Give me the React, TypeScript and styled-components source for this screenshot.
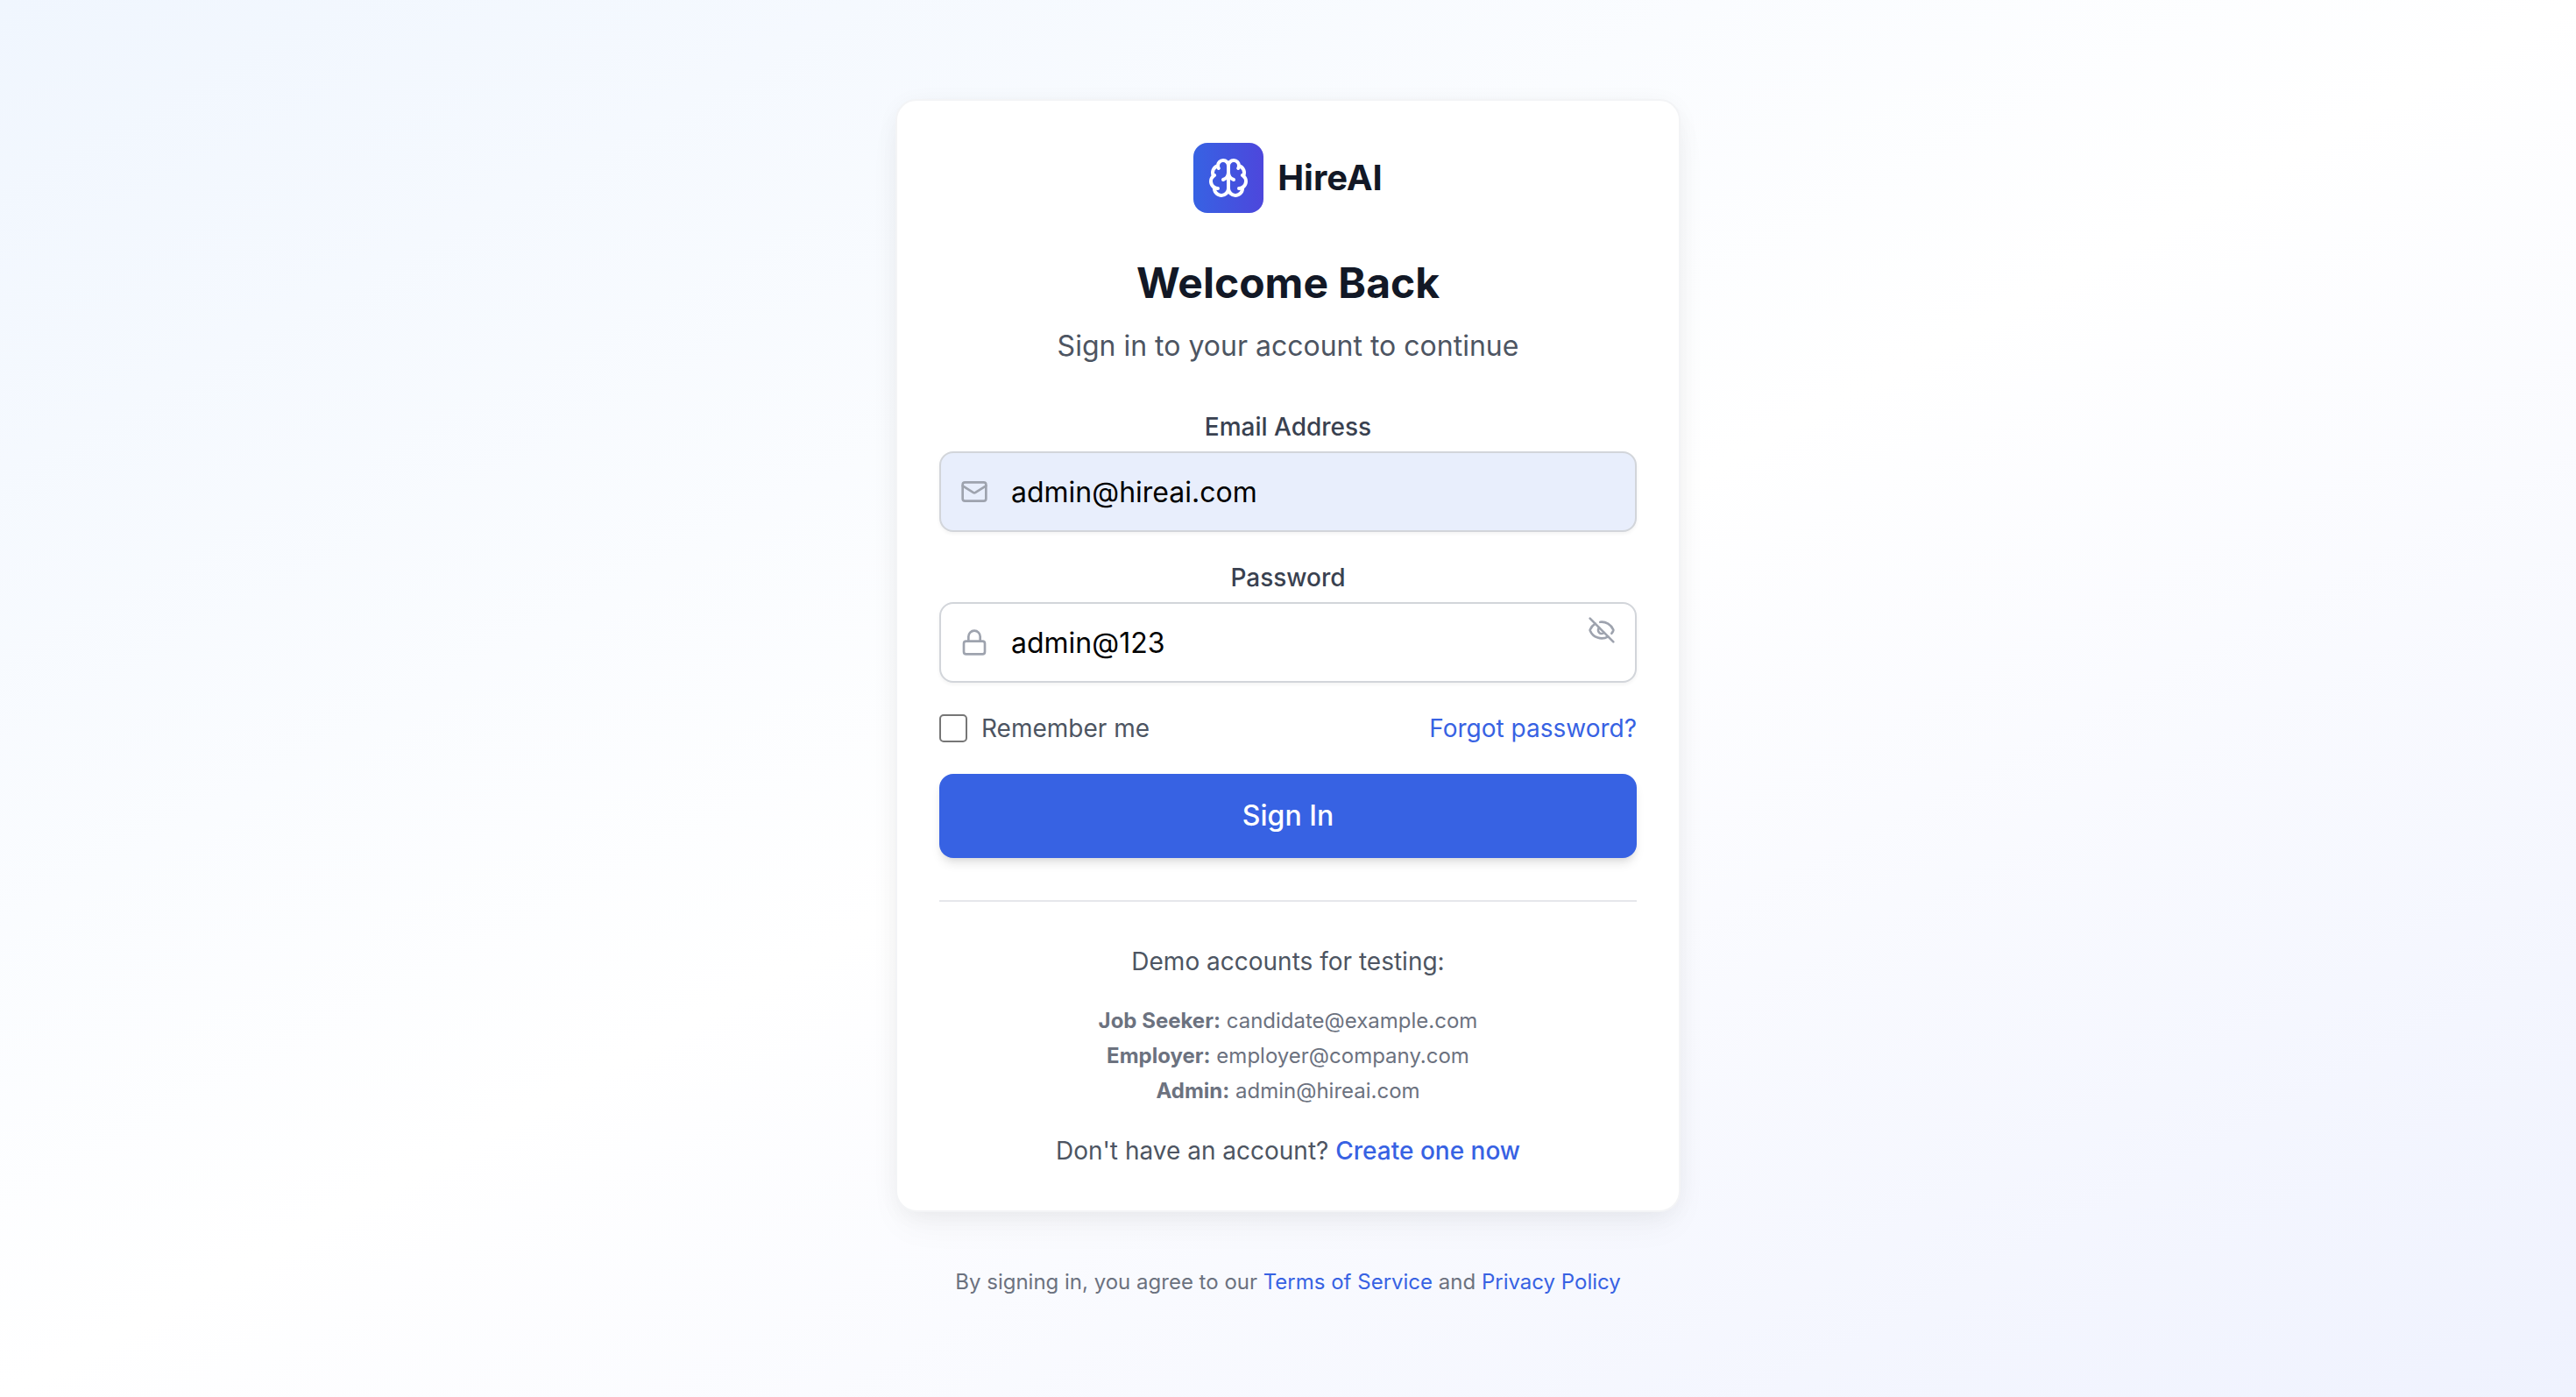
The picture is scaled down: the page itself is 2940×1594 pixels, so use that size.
import React, { useState } from "react";
import styled, { createGlobalStyle } from "styled-components";
import { EyeOff, Eye, Lock, Mail } from "lucide-react";

const color = {
  primary: "#3762e3",
  accent: "#4d47dc",
  heading: "#121826",
  label: "#394150",
  body: "#4d5562",
  muted: "#6c727f",
  icon: "#9ea3ae",
  border: "#d2d5da",
  divider: "#e6e7eb",
};

const GlobalStyle = createGlobalStyle`
  *, *::before, *::after { box-sizing: border-box; }
  body {
    margin: 0;
    font-family: Inter, "Liberation Sans", sans-serif;
    font-size: 32px;
    line-height: 48px;
    -webkit-font-smoothing: antialiased;
  }
  h1, p, ul { margin: 0; padding: 0; }
  input, button { font: inherit; }
`;

const Page = styled.div`
  min-height: 100vh;
  padding: 96px 32px 98px;
  display: flex;
  flex-direction: column;
  align-items: center;
  justify-content: center;
  text-align: center;
  background: linear-gradient(to bottom right, #f0f6fe, #ffffff, #eff2fe);
`;

const Column = styled.main`
  width: 100%;
  max-width: 896px;
  display: flex;
  flex-direction: column;
  gap: 64px;
`;

const Card = styled.section`
  display: flex;
  flex-direction: column;
  gap: 48px;
  padding: 48px;
  background: #ffffff;
  border: 2px solid #f3f4f6;
  border-radius: 24px;
  box-shadow: 0 4px 30px -6px rgba(0, 0, 0, 0.07),
    0 20px 40px -4px rgba(0, 0, 0, 0.04);
`;

const Header = styled.header`
  display: flex;
  flex-direction: column;
  align-items: center;
`;

const Brand = styled.div`
  display: flex;
  align-items: center;
  gap: 16px;
  margin-bottom: 48px;
`;

const BrandMark = styled.span`
  display: flex;
  padding: 16px;
  border-radius: 16px;
  color: #ffffff;
  background: linear-gradient(to right, ${color.primary}, ${color.accent});
`;

const BrandName = styled.span`
  font-size: 40px;
  line-height: 56px;
  font-weight: 700;
  color: ${color.heading};
`;

const Title = styled.h1`
  font-size: 48px;
  line-height: 64px;
  font-weight: 700;
  color: ${color.heading};
`;

const Subtitle = styled.p`
  margin-top: 16px;
  color: ${color.body};
`;

const Form = styled.form`
  display: flex;
  flex-direction: column;
  gap: 32px;
`;

const Field = styled.div`
  display: flex;
  flex-direction: column;
  gap: 8px;
`;

const Label = styled.label`
  font-size: 28px;
  line-height: 40px;
  font-weight: 500;
  color: ${color.label};
`;

const InputWrap = styled.div`
  position: relative;
  display: flex;
`;

const LeadingIcon = styled.span`
  position: absolute;
  top: 0;
  bottom: 0;
  left: 24px;
  display: flex;
  align-items: center;
  color: ${color.icon};
  pointer-events: none;
`;

const Input = styled.input<{ $filled?: boolean }>`
  width: 100%;
  height: 92px;
  padding: 20px 80px;
  border: 2px solid ${color.border};
  border-radius: 16px;
  color: #000000;
  background: ${(p) => (p.$filled ? "#e8eefc" : "#ffffff")};
  box-shadow: 0 2px 4px rgba(0, 0, 0, 0.05);
  outline: none;
`;

const RevealButton = styled.button`
  position: absolute;
  top: 16px;
  right: 24px;
  display: flex;
  padding: 0;
  border: 0;
  background: none;
  color: ${color.icon};
  cursor: pointer;
`;

const OptionsRow = styled.div`
  display: flex;
  align-items: center;
  justify-content: space-between;
  font-size: 28px;
  line-height: 40px;
`;

const Remember = styled.label`
  display: flex;
  align-items: center;
  gap: 16px;
  color: ${color.body};
`;

const Checkbox = styled.input`
  appearance: none;
  width: 32px;
  height: 32px;
  margin: 0;
  border: 2px solid #767676;
  border-radius: 5px;
  background: #ffffff;
  &:checked {
    border-color: ${color.primary};
    background: ${color.primary};
  }
`;

const TextLink = styled.a<{ $strong?: boolean }>`
  color: ${color.primary};
  font-weight: ${(p) => (p.$strong ? 500 : 400)};
  text-decoration: none;
`;

const SubmitButton = styled.button`
  padding: 24px 32px;
  border: 0;
  border-radius: 16px;
  font-weight: 500;
  color: #ffffff;
  background: ${color.primary};
  box-shadow: 0 8px 12px -2px rgba(0, 0, 0, 0.1),
    0 4px 8px -4px rgba(0, 0, 0, 0.1);
  cursor: pointer;
`;

const Extras = styled.div`
  display: flex;
  flex-direction: column;
  gap: 32px;
  padding-top: 48px;
  border-top: 2px solid ${color.divider};
  font-size: 28px;
  line-height: 40px;
  color: ${color.body};
`;

const DemoList = styled.ul`
  display: flex;
  flex-direction: column;
  gap: 8px;
  list-style: none;
  font-size: 24px;
  line-height: 32px;
  color: ${color.muted};
`;

const Legal = styled.p`
  font-size: 24px;
  line-height: 32px;
  color: ${color.muted};
`;

const BrainIcon = () => (
  <svg
    width="48"
    height="48"
    viewBox="0 0 24 24"
    fill="none"
    stroke="currentColor"
    strokeWidth="2"
    strokeLinecap="round"
    strokeLinejoin="round"
    aria-hidden="true"
  >
    <path d="M12 5a3 3 0 1 0-5.997.125 4 4 0 0 0-2.526 5.77 4 4 0 0 0 .556 6.588A4 4 0 1 0 12 18Z" />
    <path d="M12 5a3 3 0 1 1 5.997.125 4 4 0 0 1 2.526 5.77 4 4 0 0 1-.556 6.588A4 4 0 1 1 12 18Z" />
    <path d="M15 13a4.5 4.5 0 0 1-3-4 4.5 4.5 0 0 1-3 4" />
    <path d="M17.599 6.5a3 3 0 0 0 .399-1.375" />
    <path d="M6.003 5.125A3 3 0 0 0 6.401 6.5" />
    <path d="M3.477 10.896a4 4 0 0 1 .585-.396" />
    <path d="M19.938 10.5a4 4 0 0 1 .585.396" />
    <path d="M6 18a4 4 0 0 1-1.967-.516" />
    <path d="M19.967 17.484A4 4 0 0 1 18 18" />
  </svg>
);

const demoAccounts = [
  { role: "Job Seeker:", email: "candidate@example.com" },
  { role: "Employer:", email: "employer@company.com" },
  { role: "Admin:", email: "admin@hireai.com" },
];

export default function App() {
  const [email, setEmail] = useState("admin@hireai.com");
  const [password, setPassword] = useState("admin@123");
  const [visible, setVisible] = useState(true);

  return (
    <>
      <GlobalStyle />
      <Page>
        <Column>
          <Card>
            <Header>
              <Brand>
                <BrandMark>
                  <BrainIcon />
                </BrandMark>
                <BrandName>HireAI</BrandName>
              </Brand>
              <Title>Welcome Back</Title>
              <Subtitle>Sign in to your account to continue</Subtitle>
            </Header>

            <Form onSubmit={(e) => e.preventDefault()}>
              <Field>
                <Label htmlFor="email">Email Address</Label>
                <InputWrap>
                  <Input
                    id="email"
                    type="email"
                    $filled
                    value={email}
                    onChange={(e) => setEmail(e.target.value)}
                  />
                  <LeadingIcon>
                    <Mail size={32} />
                  </LeadingIcon>
                </InputWrap>
              </Field>

              <Field>
                <Label htmlFor="password">Password</Label>
                <InputWrap>
                  <Input
                    id="password"
                    type={visible ? "text" : "password"}
                    value={password}
                    onChange={(e) => setPassword(e.target.value)}
                  />
                  <LeadingIcon>
                    <Lock size={32} />
                  </LeadingIcon>
                  <RevealButton
                    type="button"
                    aria-label={visible ? "Hide password" : "Show password"}
                    onClick={() => setVisible(!visible)}
                  >
                    {visible ? <EyeOff size={32} /> : <Eye size={32} />}
                  </RevealButton>
                </InputWrap>
              </Field>

              <OptionsRow>
                <Remember htmlFor="remember">
                  <Checkbox id="remember" type="checkbox" />
                  Remember me
                </Remember>
                <TextLink href="#forgot">Forgot password?</TextLink>
              </OptionsRow>

              <SubmitButton type="submit">Sign In</SubmitButton>
            </Form>

            <Extras>
              <p>Demo accounts for testing:</p>
              <DemoList>
                {demoAccounts.map(({ role, email: address }) => (
                  <li key={role}>
                    <strong>{role}</strong> {address}
                  </li>
                ))}
              </DemoList>
              <p>
                Don't have an account?{" "}
                <TextLink href="#register" $strong>
                  Create one now
                </TextLink>
              </p>
            </Extras>
          </Card>

          <Legal>
            By signing in, you agree to our{" "}
            <TextLink href="#terms">Terms of Service</TextLink> and{" "}
            <TextLink href="#privacy">Privacy Policy</TextLink>
          </Legal>
        </Column>
      </Page>
    </>
  );
}
